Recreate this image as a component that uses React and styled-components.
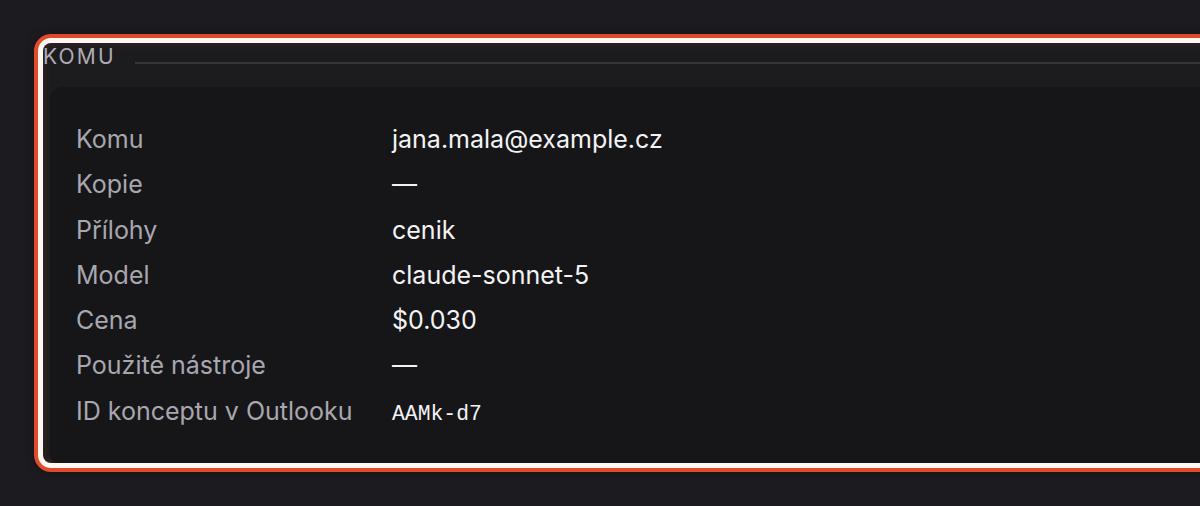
import styled, { createGlobalStyle } from "styled-components";

const GlobalStyle = createGlobalStyle`
  html, body {
    margin: 0;
    padding: 0;
    background: #1c1c20;
    overflow: hidden;
  }
  body {
    font-family: Inter, "Noto Sans", sans-serif;
  }
`;

const rows = [
  { label: "Komu", value: "jana.mala@example.cz" },
  { label: "Kopie", value: "—" },
  { label: "Přílohy", value: "cenik" },
  { label: "Model", value: "claude-sonnet-5" },
  { label: "Cena", value: "$0.030" },
  { label: "Použité nástroje", value: "—" },
  { label: "ID konceptu v Outlooku", value: "AAMk-d7", mono: true },
];

export default function App() {
  return (
    <Page>
      <GlobalStyle />
      <Section>
        <Heading>KOMU</Heading>
        <Card>
          {rows.map((row) => (
            <Row key={row.label}>
              <Label>{row.label}</Label>
              <Value $mono={row.mono}>{row.value}</Value>
            </Row>
          ))}
        </Card>
      </Section>
    </Page>
  );
}

const Page = styled.div`
  width: 1200px;
  height: 506px;
  padding: 43px 0 0 43px;
  box-sizing: border-box;
`;

const Section = styled.section`
  display: flex;
  flex-direction: column;
  width: 1200px;
  height: 420px;
  border-radius: 8px;
  background: #1c1c1f;
  box-shadow: inset 0 0 10px rgba(210, 70, 45, 0.22), 0 0 0 5px #fff8f1,
    0 0 0 9px #e04a2d, 0 0 10px 9px rgba(0, 0, 0, 0.35);
`;

const Heading = styled.h3`
  display: flex;
  align-items: flex-start;
  height: 44px;
  margin: 0;
  font-size: 21px;
  line-height: 28px;
  font-weight: 400;
  letter-spacing: 2.2px;
  color: #aeacb4;

  &::after {
    content: "";
    flex: 1;
    height: 2px;
    margin: 19px 0 0 19px;
    background: #34343a;
  }
`;

const Card = styled.div`
  flex: 1;
  margin-left: 7px;
  padding: 30px 26px 0;
  border-radius: 12px 0 0 8px;
  background: #161618;
`;

const Row = styled.div`
  display: grid;
  grid-template-columns: 316px 1fr;
  align-items: baseline;
  height: 45.3px;
  line-height: 45.3px;
`;

const Label = styled.div`
  font-size: 25px;
  color: #a8a7b0;
`;

const Value = styled.div`
  font-family: ${(p) =>
    p.$mono ? '"Liberation Mono", "DejaVu Sans Mono", monospace' : "inherit"};
  font-size: ${(p) => (p.$mono ? "21.4px" : "25px")};
  color: #f3f3f5;
`;
